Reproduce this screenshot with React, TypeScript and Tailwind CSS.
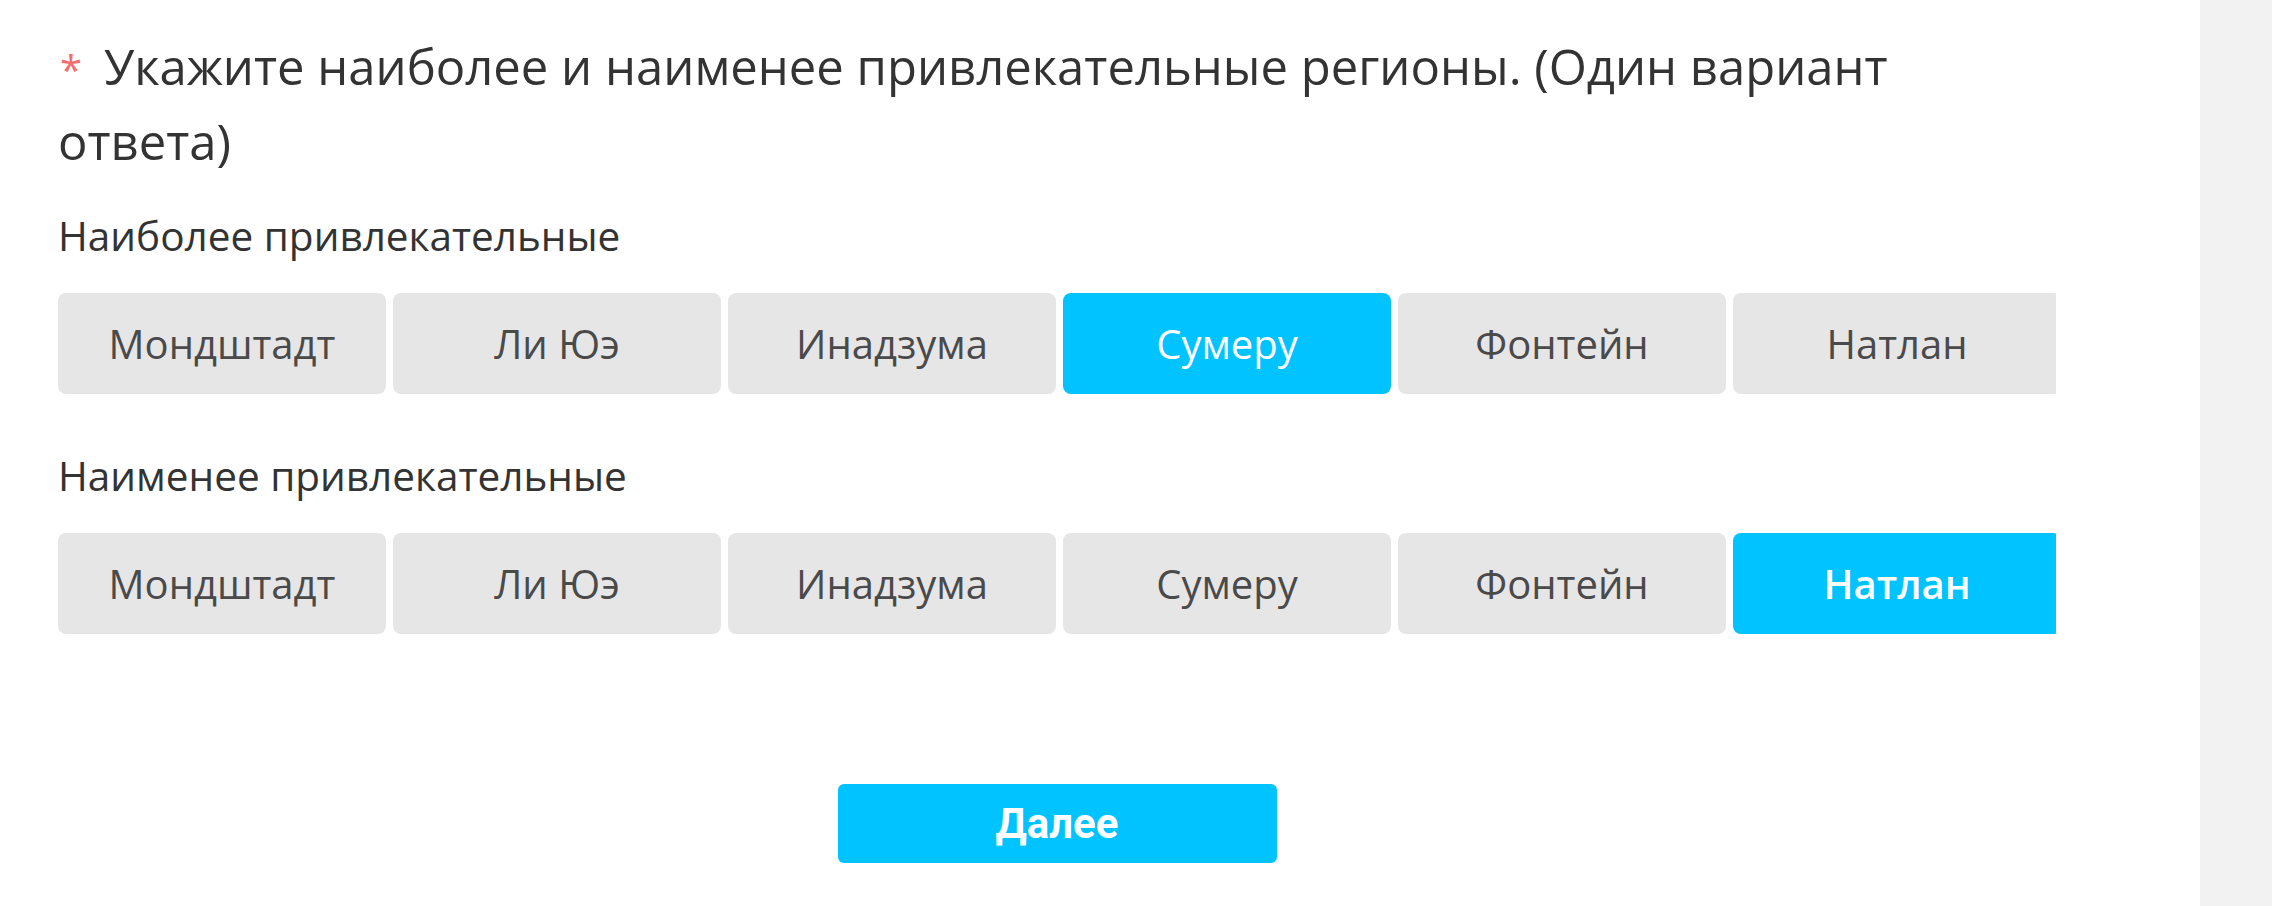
import React from "react";

const regions = ["Мондштадт", "Ли Юэ", "Инадзума", "Сумеру", "Фонтейн", "Натлан"];

function Row({ selected, boldSelected }: { selected: string; boldSelected?: boolean }) {
  return (
    <div className="flex gap-[7px] overflow-hidden w-[1998px]">
      {regions.map((r) => {
        const on = r === selected;
        return (
          <div
            key={r}
            className={
              on
                ? "shrink-0 w-[328px] h-[101px] rounded-[8px] bg-[#00c3ff] text-white flex items-center justify-center text-[40px] " +
                  (boldSelected ? "font-semibold" : "font-normal")
                : "shrink-0 w-[328px] h-[101px] rounded-[8px] bg-[#e6e6e6] text-[#4a4a4a] flex items-center justify-center text-[40px]"
            }
          >
            {r}
          </div>
        );
      })}
    </div>
  );
}

export default function App() {
  return (
    <div
      className="flex w-[2272px] h-[906px] bg-white overflow-hidden"
      style={{ fontFamily: '"Open Sans", "Noto Sans", sans-serif' }}
    >
      <div className="w-[2200px] shrink-0 pl-[58px] pt-[29px]">
        <div className="w-[1998px] flex flex-col">
          <div className="w-[1920px] text-[49px] leading-[75px] text-[#333333]">
            <span className="inline-block align-baseline text-[#f56c6c] text-[40px] leading-[40px] ml-[2px] mr-[22px]">*</span>
            Укажите наиболее и наименее привлекательные регионы. (Один вариант ответа)
          </div>
          <div className="mt-[28px] text-[40.5px] leading-[58px] text-[#333333]">Наиболее привлекательные</div>
          <div className="mt-[28px]">
            <Row selected="Сумеру" />
          </div>
          <div className="mt-[53px] text-[40.5px] leading-[58px] text-[#333333]">Наименее привлекательные</div>
          <div className="mt-[28px]">
            <Row selected="Натлан" boldSelected />
          </div>
          <div className="mt-[150px] flex justify-center">
            <div
              className="w-[439px] h-[79px] rounded-[6px] bg-[#00c3ff] text-white font-bold text-[42px] flex items-center justify-center"
              style={{ fontFamily: 'Roboto, "Liberation Sans", sans-serif' }}
            >
              Далее
            </div>
          </div>
        </div>
      </div>
      <div className="flex-1 bg-[#f2f2f2]" />
    </div>
  );
}
